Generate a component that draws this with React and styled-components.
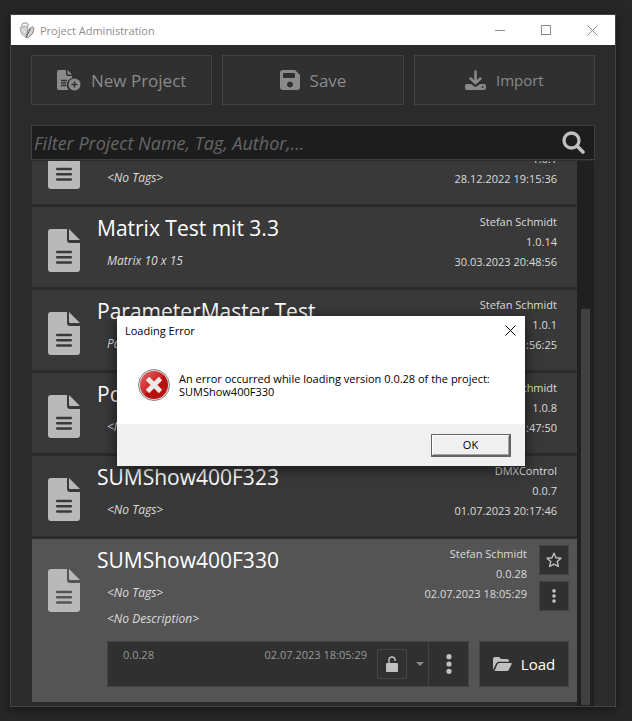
import React from 'react';
import styled, { createGlobalStyle, css } from 'styled-components';

const GlobalStyle = createGlobalStyle`
  * {
    box-sizing: border-box;
  }

  body {
    margin: 0;
    background: #272727;
    font-family: 'Open Sans', 'Noto Sans', sans-serif;
    font-size: 11px;
    color: #dcdcdc;
  }

  button,
  input {
    font-family: inherit;
  }
`;

const Desktop = styled.div`
  height: 100vh;
  padding: 14px 16px 14px 10px;
`;

const AppWindow = styled.div`
  position: relative;
  height: 100%;
  display: flex;
  flex-direction: column;
  border: 1px solid #444;
  background: #2b2b2b;
  box-shadow: 0 2px 10px rgba(0, 0, 0, 0.5);
`;

const TitleBar = styled.header`
  flex: none;
  height: 30px;
  padding-left: 8px;
  display: flex;
  align-items: center;
  gap: 5px;
  background: white;
  color: #8c8c8c;
`;

const WindowTitle = styled.h1`
  margin: 0;
  flex-grow: 1;
  font-size: 11px;
  font-weight: normal;
`;

const WindowButtons = styled.div`
  display: flex;
`;

const WindowButton = styled.button`
  width: 46px;
  height: 30px;
  padding: 0;
  display: flex;
  align-items: center;
  justify-content: center;
  border: 0;
  background: none;
  color: ${(props) => (props.$dark ? 'black' : '#8c8c8c')};
`;

const Content = styled.main`
  flex: 1;
  min-height: 0;
  padding: 10px 20px 0;
  display: flex;
  flex-direction: column;
`;

const Toolbar = styled.div`
  flex: none;
  margin-bottom: 20px;
  display: flex;
  gap: 10px;
`;

const ToolButton = styled.button`
  flex: 1;
  height: 50px;
  padding: 0;
  display: flex;
  align-items: center;
  justify-content: center;
  gap: 10px;
  border: 1px solid #434343;
  background: #303030;
  color: #8a8a8a;
  font-size: ${(props) => (props.$small ? '15px' : '17px')};
`;

const SearchBox = styled.label`
  flex: none;
  height: 35px;
  padding: 0 9px 0 2px;
  display: flex;
  align-items: center;
  border: 1px solid #3f3f3f;
  background: #1d1d1d;
  color: #c0c0c0;
`;

const SearchInput = styled.input`
  flex: 1;
  min-width: 0;
  padding: 0;
  border: 0;
  outline: 0;
  background: none;
  color: #dcdcdc;
  font-size: 18px;
  font-style: italic;

  &::placeholder {
    color: #666;
  }
`;

const ListArea = styled.div`
  flex: 1;
  min-height: 0;
  margin: 1px 1px 0;
  display: flex;
`;

// keeps the last project in view, older ones run out at the top
const ProjectList = styled.ul`
  flex: 1;
  min-width: 0;
  margin: 0;
  padding: 0 0 4px;
  display: flex;
  flex-direction: column;
  justify-content: flex-end;
  gap: 3px;
  overflow: hidden;
  list-style: none;
`;

const ScrollTrack = styled.div`
  width: 17px;
  padding: 148px 4px 1px;
  background: #202020;
`;

const ScrollThumb = styled.div`
  height: 100%;
  background: #404040;
`;

const ProjectRow = styled.li`
  flex: none;
  min-height: 80px;
  padding: 5px 8px 0 16px;
  background: #393939;

  ${(props) => props.$selected && css`
    padding-bottom: 15px;
    background: #545454;
  `}
`;

const ProjectHeader = styled.div`
  display: flex;
`;

const ProjectIcon = styled.div`
  width: 49px;
  padding-top: ${(props) => (props.$selected ? '25px' : '17px')};
  color: #b9b9b9;
`;

const ProjectText = styled.div`
  flex: 1;
  min-width: 0;
`;

const ProjectName = styled.h2`
  height: 32px;
  margin: 0;
  color: white;
  font-size: 21px;
  font-weight: normal;
  line-height: 32px;
  white-space: nowrap;
`;

const ProjectNote = styled.p`
  height: 26px;
  margin: 0;
  padding: 4px 0 0 10px;
  font-size: 12px;
  font-style: italic;
  line-height: 26px;
`;

const ProjectMeta = styled.div`
  padding-right: 12px;
  text-align: right;
  line-height: 20px;
`;

const RowActions = styled.div`
  padding-top: 1px;
  display: flex;
  flex-direction: column;
  gap: 6px;
`;

const IconButton = styled.button`
  width: 30px;
  height: 30px;
  padding: 0;
  display: flex;
  align-items: center;
  justify-content: center;
  border: 1px solid #444;
  background: #303030;
  color: #c0c0c0;
`;

const VersionBar = styled.div`
  margin: 13px 0 0 59px;
  display: flex;
  gap: 10px;
`;

const VersionPicker = styled.div`
  flex: 1;
  height: 46px;
  display: flex;
  border: 1px solid #444;
  background: #303030;
  color: #999;
`;

const VersionDetails = styled.div`
  flex: 1;
  padding: 4px 10px 0 15px;
  display: flex;
  justify-content: space-between;
  line-height: 18px;
`;

const VersionControls = styled.div`
  display: flex;
  align-items: center;
`;

const DropButton = styled.button`
  width: 22px;
  height: 44px;
  padding: 0 0 0 4px;
  display: flex;
  align-items: center;
  justify-content: center;
  border: 0;
  border-right: 1px solid #444;
  background: none;
  color: #8a8a8a;
`;

const MoreButton = styled.button`
  width: 39px;
  height: 44px;
  padding: 0;
  display: flex;
  align-items: center;
  justify-content: center;
  border: 0;
  background: none;
  color: #c0c0c0;
`;

const LoadButton = styled.button`
  width: 90px;
  height: 46px;
  padding: 0;
  display: flex;
  align-items: center;
  justify-content: center;
  gap: 9px;
  border: 1px solid #444;
  background: #303030;
  color: white;
  font-size: 15px;
`;

const Dialog = styled.section`
  position: absolute;
  top: 301px;
  left: 106px;
  width: 408px;
  background: white;
  box-shadow: 0 3px 14px rgba(0, 0, 0, 0.6);
  color: black;
`;

const DialogHeader = styled.header`
  height: 29px;
  padding-left: 8px;
  display: flex;
  align-items: center;
  justify-content: space-between;
`;

const DialogTitle = styled.h2`
  margin: 0;
  font-size: 11px;
  font-weight: normal;
`;

const DialogClose = styled(WindowButton)`
  width: 30px;
`;

const DialogBody = styled.div`
  height: 79px;
  padding: 23px 20px 0;
  display: flex;
  gap: 8px;
`;

const DialogMessage = styled.p`
  margin: 0;
  padding-top: 4px;
  font-size: 11px;
  line-height: 13px;
`;

const DialogFooter = styled.footer`
  height: 42px;
  padding: 0 14px;
  display: flex;
  align-items: center;
  justify-content: flex-end;
  background: #f0f0f0;
`;

const OkButton = styled.button`
  width: 80px;
  height: 23px;
  padding: 0;
  border: 1px solid #646464;
  border-width: 1px 2px 2px 1px;
  background: #f0f0f0;
  box-shadow: inset 1px 1px white, inset -1px -1px #a0a0a0;
  color: black;
  font-size: 11px;
`;

const AppLogo = () => (
  <svg width="16" height="17" viewBox="0 0 16 17" aria-hidden="true">
    <path d="M3 6V2.5L5 1h2.500L9 2.500V6" fill="none" stroke="#adadad" strokeWidth="1.300" />
    <path d="M1 5.500L7.500 4l1.500 4-2 7-4.500-3z" fill="#d2d2d2" stroke="#a8a8a8" />
    <path d="M9 8l4.500-3.500L15 6l-1 5-4.500 4.500H7z" fill="#cfcfcf" stroke="#888" />
    <path d="M11.500 6.500L7 15.500" stroke="#666" fill="none" />
    <path d="M3 7l4 4" stroke="#eee" fill="none" />
  </svg>
);

const CloseIcon = () => (
  <svg width="11" height="11" viewBox="0 0 11 11" aria-hidden="true">
    <path d="M.5.5l10 10M10.5.5l-10 10" stroke="currentColor" fill="none" />
  </svg>
);

const DocumentIcon = ({ lines }) => (
  <svg width="32" height="43" viewBox="0 0 32 43" aria-hidden="true">
    <path d="M3 0h16v11q0 3 3 3h10v26q0 3-3 3H3q-3 0-3-3V3Q0 0 3 0z" fill="currentColor" />
    <path d="M21 0l11 11H22q-1 0-1-1z" fill="currentColor" />
    <path d="M9.200 23h13.600M9.200 28.300h13.600M9.200 33.600h13.600" stroke={lines} strokeWidth="2.500" strokeLinecap="round" />
  </svg>
);

const NewProjectIcon = () => (
  <svg width="24" height="21" viewBox="0 0 24 21" aria-hidden="true">
    <path d="M2 0h7v4q0 2 2 2h4v2a7 7 0 0 0-3.500 11.500q.3.500-.5.500H2q-2 0-2-2V2Q0 0 2 0z" fill="currentColor" />
    <path d="M10.500 0L15 4.500h-3.500q-1 0-1-1z" fill="currentColor" />
    <path d="M4 10.500h6M4 13h5M4 15.500h5" stroke="#303030" strokeWidth="1.300" />
    <circle cx="17.500" cy="14.500" r="6" fill="currentColor" />
    <path d="M17.500 11.500v6M14.500 14.500h6" stroke="#303030" strokeWidth="1.500" />
  </svg>
);

const SaveIcon = () => (
  <svg width="20" height="20" viewBox="0 0 20 20" aria-hidden="true">
    <path
      d="M3 0h12l5 5v12q0 3-3 3H3q-3 0-3-3V3q0-3 3-3zM4 3q-1 0-1 1v3q0 1 1 1h10q1 0 1-1V4q0-1-1-1zM10 11.500a3 3 0 1 0 .01 0z"
      fill="currentColor"
      fillRule="evenodd"
    />
  </svg>
);

const ImportIcon = () => (
  <svg width="21" height="20" viewBox="0 0 21 20" aria-hidden="true">
    <path d="M10.500 1.500v11M5.500 8.500l5 4.500 5-4.500" fill="none" stroke="currentColor" strokeWidth="2.500" strokeLinecap="round" />
    <path d="M2 14h4l3 2.300q1.500 1 3 0L15 14h4q2 0 2 2v2q0 2-2 2H2q-2 0-2-2v-2q0-2 2-2zM17.500 16a1 1 0 1 0 .01 0z" fill="currentColor" fillRule="evenodd" />
  </svg>
);

const SearchIcon = () => (
  <svg width="23" height="23" viewBox="0 0 23 23" aria-hidden="true">
    <circle cx="9.500" cy="9.500" r="7.500" fill="none" stroke="currentColor" strokeWidth="3.300" />
    <path d="M15 15l6 6" stroke="currentColor" strokeWidth="3.600" strokeLinecap="round" />
  </svg>
);

const StarIcon = () => (
  <svg width="16" height="16" viewBox="0 0 16 16" aria-hidden="true">
    <path d="M8 1.200l2 4.500 5 .6-3.700 3.300 1 4.900L8 12.100l-4.300 2.400 1-4.900L1 6.300l5-.6z" fill="none" stroke="currentColor" strokeWidth="1.400" strokeLinejoin="round" />
  </svg>
);

const DotsIcon = ({ size }) => (
  <svg width={size} height={size} viewBox="0 0 20 20" aria-hidden="true">
    <g fill="currentColor">
      <circle cx="10" cy="2.700" r="2.600" />
      <circle cx="10" cy="10" r="2.600" />
      <circle cx="10" cy="17.300" r="2.600" />
    </g>
  </svg>
);

const UnlockIcon = () => (
  <svg width="14" height="16" viewBox="0 0 14 16" aria-hidden="true">
    <rect x="1" y="7" width="12" height="9" rx="1" fill="currentColor" />
    <path d="M4 7.500V4a3 3 0 0 1 6 0v1" fill="none" stroke="currentColor" strokeWidth="1.400" />
  </svg>
);

const FolderIcon = () => (
  <svg width="19" height="15" viewBox="0 0 19 15" aria-hidden="true">
    <path d="M0 13V2Q0 0 2 0h4l2 2h6q2 0 2 2v.8H6q-2 0-3 2z" fill="#c0c0c0" />
    <path d="M6.500 6H18q1 0 .7 1l-3 6q-.7 1-2 1H1.500l3-7q.6-1 2-1z" fill="#c0c0c0" />
  </svg>
);

const ErrorIcon = () => (
  <svg width="34" height="34" viewBox="0 0 34 34" aria-hidden="true">
    <defs>
      <linearGradient id="errorFill" x1="0" y1="0" x2="1" y2="1">
        <stop offset="0" stopColor="#e46a6a" />
        <stop offset="0.500" stopColor="#c92323" />
        <stop offset="0.520" stopColor="#b50d0d" />
        <stop offset="1" stopColor="#c01515" />
      </linearGradient>
    </defs>
    <circle cx="17" cy="17" r="15.500" fill="#e4e4e4" stroke="#858585" />
    <circle cx="17" cy="17" r="14" fill="url(#errorFill)" />
    <path d="M10.500 10.500l13 13M23.500 10.500l-13 13" stroke="#e9e9e9" strokeWidth="4.800" />
  </svg>
);

const projects = [
  { id: 1, version: '1.0.1', date: '28.12.2022 19:15:36', tags: '<No Tags>' },
  { id: 2, name: 'Matrix Test mit 3.3', author: 'Stefan Schmidt', version: '1.0.14', date: '30.03.2023 20:48:56', tags: 'Matrix 10 x 15' },
  { id: 3, name: 'ParameterMaster Test', author: 'Stefan Schmidt', version: '1.0.1', date: ':56:25', tags: 'Pa' },
  { id: 4, name: 'Po', author: 'Stefan Schmidt', version: '1.0.8', date: ':47:50', tags: '<No Tags>' },
  { id: 5, name: 'SUMShow400F323', author: 'DMXControl', version: '0.0.7', date: '01.07.2023 20:17:46', tags: '<No Tags>' },
  { id: 6, name: 'SUMShow400F330', author: 'Stefan Schmidt', version: '0.0.28', date: '02.07.2023 18:05:29', tags: '<No Tags>', description: '<No Description>', selected: true },
];

const Project = ({ project }) => (
  <ProjectRow $selected={project.selected}>
    <ProjectHeader>
      <ProjectIcon $selected={project.selected}>
        <DocumentIcon lines={project.selected ? '#545454' : '#393939'} />
      </ProjectIcon>
      <ProjectText>
        <ProjectName>{project.name}</ProjectName>
        <ProjectNote>{project.tags}</ProjectNote>
        {project.description && <ProjectNote>{project.description}</ProjectNote>}
      </ProjectText>
      <ProjectMeta>
        <div>{project.author || '\u00a0'}</div>
        <div>{project.version}</div>
        <div>{project.date}</div>
      </ProjectMeta>
      {project.selected && (
        <RowActions>
          <IconButton aria-label="Favourite"><StarIcon /></IconButton>
          <IconButton aria-label="Project menu"><DotsIcon size={14} /></IconButton>
        </RowActions>
      )}
    </ProjectHeader>
    {project.selected && (
      <VersionBar>
        <VersionPicker>
          <VersionDetails>
            <span>{project.version}</span>
            <span>{project.date}</span>
          </VersionDetails>
          <VersionControls>
            <IconButton aria-label="Lock version"><UnlockIcon /></IconButton>
            <DropButton aria-label="Choose version">
              <svg width="8" height="4" viewBox="0 0 8 4" aria-hidden="true">
                <path d="M0 0h8L4 4z" fill="currentColor" />
              </svg>
            </DropButton>
            <MoreButton aria-label="Version menu"><DotsIcon size={20} /></MoreButton>
          </VersionControls>
        </VersionPicker>
        <LoadButton>
          <FolderIcon />
          Load
        </LoadButton>
      </VersionBar>
    )}
  </ProjectRow>
);

const App = () => (
  <Desktop>
    <GlobalStyle />
    <AppWindow>
      <TitleBar>
        <AppLogo />
        <WindowTitle>Project Administration</WindowTitle>
        <WindowButtons>
          <WindowButton aria-label="Minimize">
            <svg width="10" height="11" viewBox="0 0 10 11" aria-hidden="true">
              <path d="M0 5.500h10" stroke="currentColor" />
            </svg>
          </WindowButton>
          <WindowButton aria-label="Maximize">
            <svg width="10" height="10" viewBox="0 0 10 10" aria-hidden="true">
              <rect x="0.500" y="0.500" width="9" height="9" fill="none" stroke="currentColor" />
            </svg>
          </WindowButton>
          <WindowButton aria-label="Close"><CloseIcon /></WindowButton>
        </WindowButtons>
      </TitleBar>
      <Content>
        <Toolbar>
          <ToolButton>
            <NewProjectIcon />
            New Project
          </ToolButton>
          <ToolButton>
            <SaveIcon />
            Save
          </ToolButton>
          <ToolButton $small>
            <ImportIcon />
            Import
          </ToolButton>
        </Toolbar>
        <SearchBox>
          <SearchInput type="text" aria-label="Filter projects" placeholder="Filter Project Name, Tag, Author,..." />
          <SearchIcon />
        </SearchBox>
        <ListArea>
          <ProjectList>
            {projects.map((project) => (
              <Project project={project} key={project.id} />
            ))}
          </ProjectList>
          <ScrollTrack>
            <ScrollThumb />
          </ScrollTrack>
        </ListArea>
      </Content>
      <Dialog role="dialog" aria-labelledby="dialog-title">
        <DialogHeader>
          <DialogTitle id="dialog-title">Loading Error</DialogTitle>
          <DialogClose $dark aria-label="Close dialog"><CloseIcon /></DialogClose>
        </DialogHeader>
        <DialogBody>
          <ErrorIcon />
          <DialogMessage>
            An error occurred while loading version 0.0.28 of the project:
            <br />
            SUMShow400F330
          </DialogMessage>
        </DialogBody>
        <DialogFooter>
          <OkButton>OK</OkButton>
        </DialogFooter>
      </Dialog>
    </AppWindow>
  </Desktop>
);

export default App;
